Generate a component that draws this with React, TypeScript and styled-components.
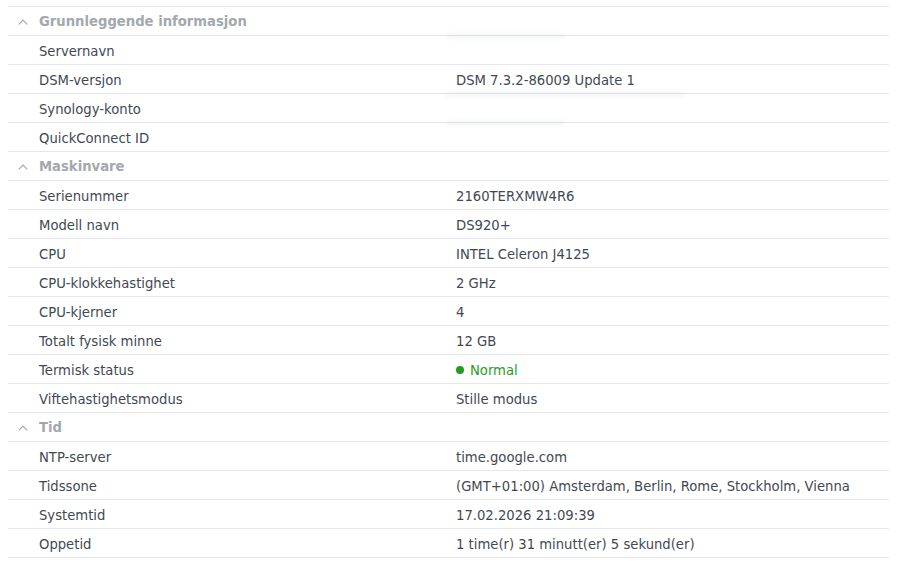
import React from 'react'
import styled, { createGlobalStyle } from 'styled-components'

const GlobalStyle = createGlobalStyle`
  html, body {
    margin: 0;
    padding: 0;
    background: #ffffff;
  }
  body {
    font-family: 'DejaVu Sans', Verdana, sans-serif;
    font-size: 13.2px;
    color: #3f4954;
  }
`

const Page = styled.div`
  padding: 6px 11px 0 8px;
`

const Table = styled.div`
  border-top: 1px solid #e4e7eb;
`

const Row = styled.div`
  display: grid;
  grid-template-columns: 448px 1fr;
  height: 29px;
  box-sizing: border-box;
  padding-top: 2px;
  align-items: center;
  border-bottom: 1px solid #e4e7eb;
`

const GroupRow = styled.div`
  display: flex;
  align-items: center;
  height: 29px;
  padding-top: 1px;
  box-sizing: border-box;
  border-bottom: 1px solid #e4e7eb;
  padding-left: 10px;
  gap: 11px;
  font-weight: bold;
  color: #a3a8ad;
`

const Label = styled.div`
  padding-left: 31px;
  white-space: nowrap;
`

const Value = styled.div`
  position: relative;
  white-space: nowrap;
`

const Status = styled.span<{ $color: string }>`
  display: inline-flex;
  align-items: center;
  gap: 6px;
  color: ${p => p.$color};

  &::before {
    content: '';
    width: 8px;
    height: 8px;
    border-radius: 50%;
    background: ${p => p.$color};
  }
`

const Smudge = styled.span<{ $w: number }>`
  position: absolute;
  left: -10px;
  top: -17px;
  width: ${p => p.$w}px;
  height: 4px;
  border-radius: 4px;
  background: rgba(150, 155, 160, 0.12);
  filter: blur(2px);
`

const Chevron = () => (
  <svg width="10" height="6" viewBox="0 0 10 6" fill="none">
    <path d="M0.8 5.4 L5 1.2 L9.2 5.4" stroke="#a3a8ad" strokeWidth="1.2" />
  </svg>
)

type Item = { label: string; value?: React.ReactNode; hidden?: number }
type Group = { title: string; items: Item[] }

const groups: Group[] = [
  {
    title: 'Grunnleggende informasjon',
    items: [
      { label: 'Servernavn', hidden: 120 },
      { label: 'DSM-versjon', value: 'DSM 7.3.2-86009 Update 1' },
      { label: 'Synology-konto', hidden: 240 },
      { label: 'QuickConnect ID', hidden: 120 },
    ],
  },
  {
    title: 'Maskinvare',
    items: [
      { label: 'Serienummer', value: '2160TERXMW4R6' },
      { label: 'Modell navn', value: 'DS920+' },
      { label: 'CPU', value: 'INTEL Celeron J4125' },
      { label: 'CPU-klokkehastighet', value: '2 GHz' },
      { label: 'CPU-kjerner', value: '4' },
      { label: 'Totalt fysisk minne', value: '12 GB' },
      { label: 'Termisk status', value: <Status $color="#1f9d1f">Normal</Status> },
      { label: 'Viftehastighetsmodus', value: 'Stille modus' },
    ],
  },
  {
    title: 'Tid',
    items: [
      { label: 'NTP-server', value: 'time.google.com' },
      { label: 'Tidssone', value: '(GMT+01:00) Amsterdam, Berlin, Rome, Stockholm, Vienna' },
      { label: 'Systemtid', value: '17.02.2026 21:09:39' },
      { label: 'Oppetid', value: '1 time(r) 31 minutt(er) 5 sekund(er)' },
    ],
  },
]

export default function App() {
  return (
    <Page>
      <GlobalStyle />
      <Table>
        {groups.map(g => (
          <React.Fragment key={g.title}>
            <GroupRow>
              <Chevron />
              {g.title}
            </GroupRow>
            {g.items.map(it => (
              <Row key={it.label}>
                <Label>{it.label}</Label>
                <Value>
                  {it.value}
                  {it.hidden ? <Smudge $w={it.hidden} /> : null}
                </Value>
              </Row>
            ))}
          </React.Fragment>
        ))}
      </Table>
    </Page>
  )
}
